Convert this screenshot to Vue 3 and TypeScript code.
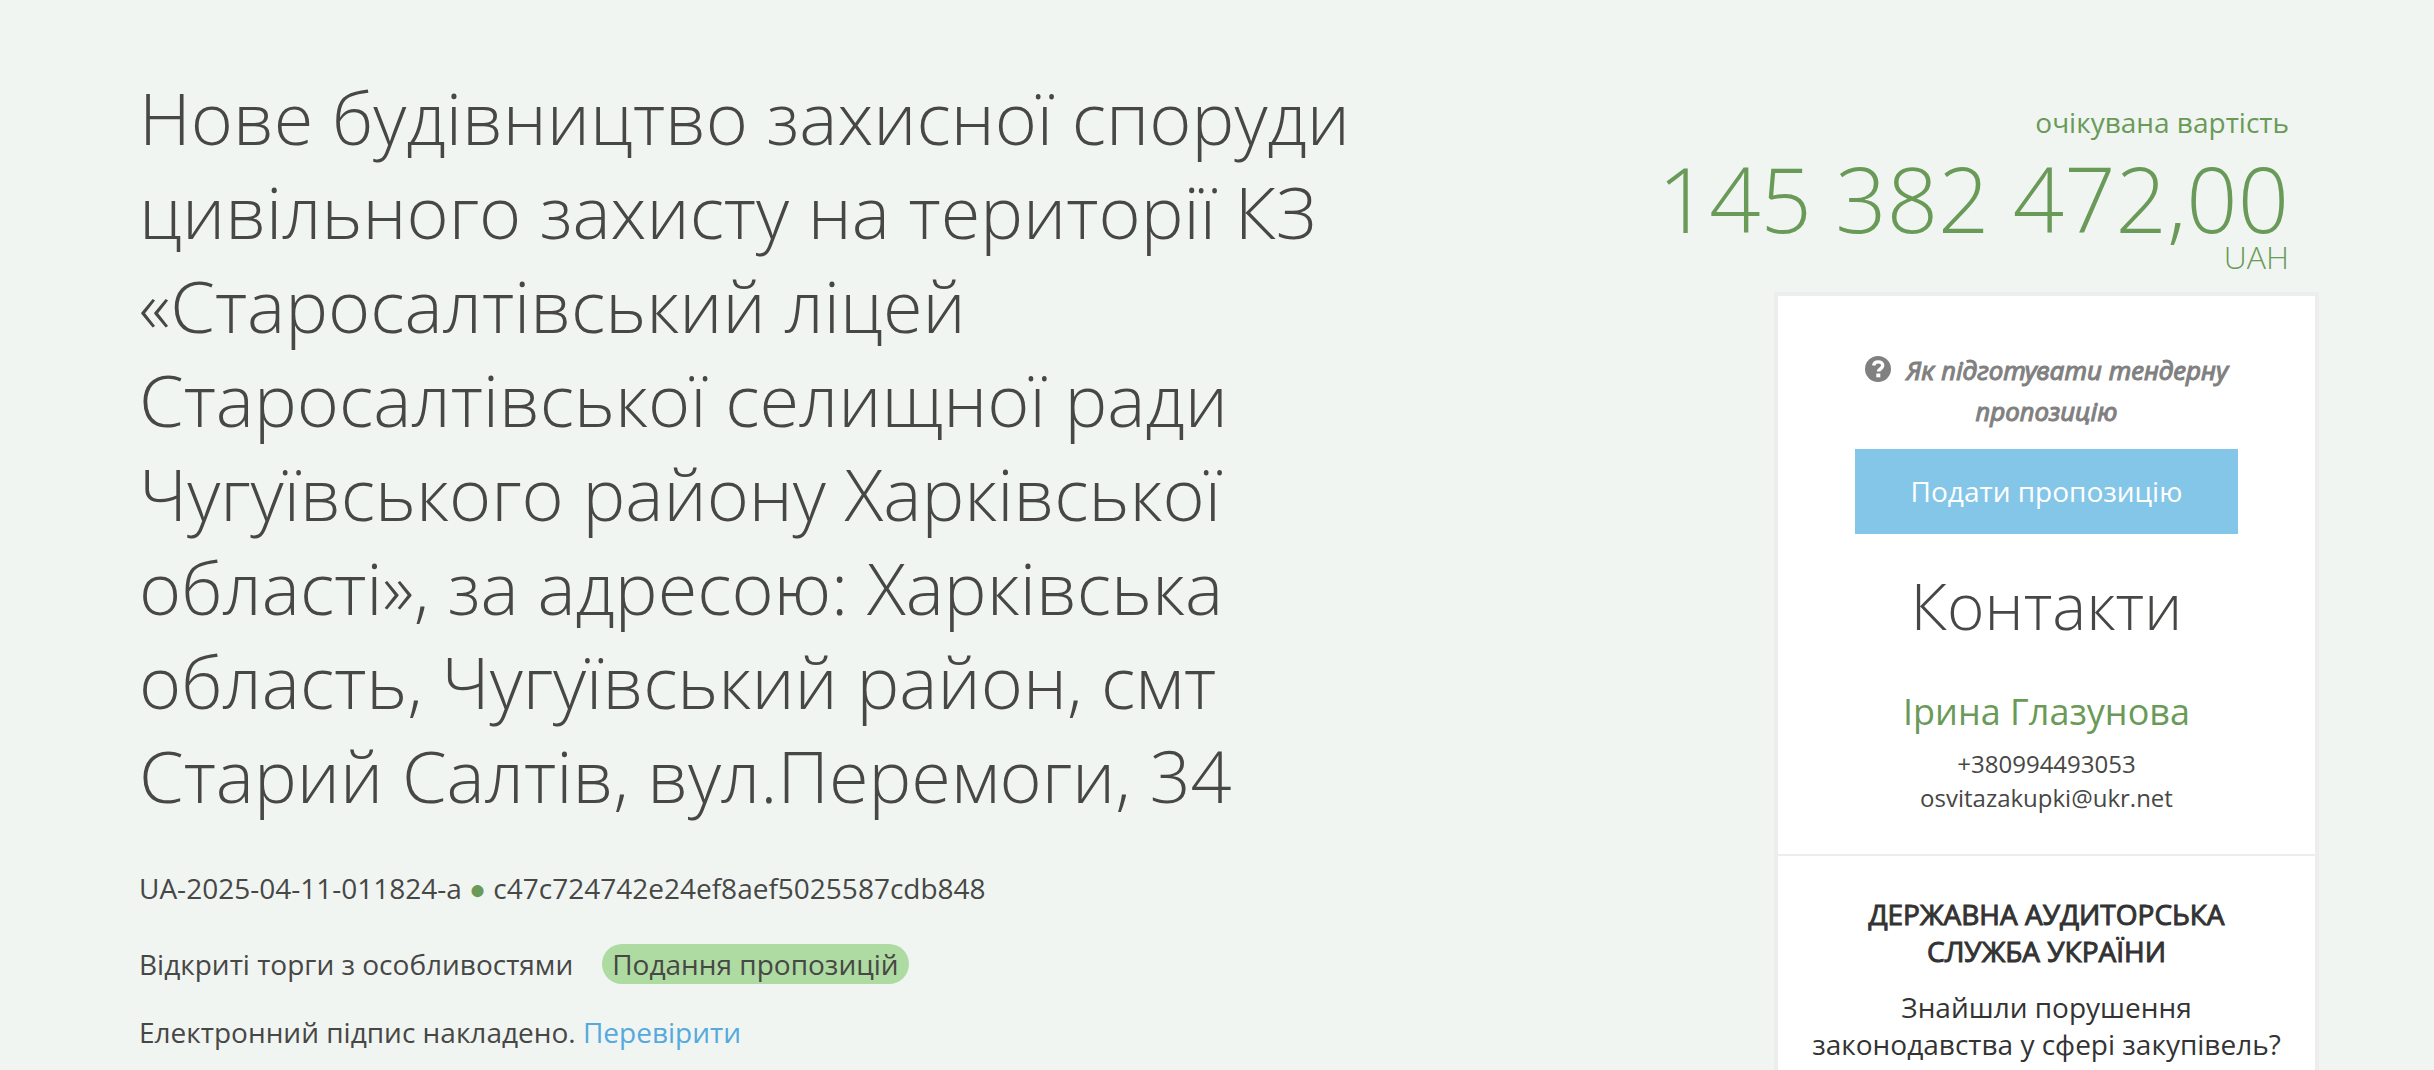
<script setup lang="ts">
interface Tender {
  title: string
  id: string
  hash: string
  procedure: string
  status: string
  amount: string
  currency: string
}

const tender: Tender = {
  title:
    'Нове будівництво захисної споруди цивільного захисту на території КЗ «Старосалтівський ліцей Старосалтівської селищної ради Чугуївського району Харківської області», за адресою: Харківська область, Чугуївський район, смт Старий Салтів, вул.Перемоги, 34',
  id: 'UA-2025-04-11-011824-a',
  hash: 'c47c724742e24ef8aef5025587cdb848',
  procedure: 'Відкриті торги з особливостями',
  status: 'Подання пропозицій',
  amount: '145 382 472,00',
  currency: 'UAH',
}

const contact = {
  name: 'Ірина Глазунова',
  phone: '+380994493053',
  email: 'osvitazakupki@ukr.net',
}
</script>

<template>
  <main class="page">
    <section class="summary">
      <h1 class="title">{{ tender.title }}</h1>
      <p class="ids">{{ tender.id }} <span class="dot">●</span> {{ tender.hash }}</p>
      <p class="type">
        <span>{{ tender.procedure }}</span>
        <span class="badge">{{ tender.status }}</span>
      </p>
      <p class="signature">Електронний підпис накладено. <a href="#sign">Перевірити</a></p>
    </section>

    <aside class="side">
      <div class="value">
        <div class="value-label">очікувана вартість</div>
        <div class="value-amount">{{ tender.amount }}</div>
        <div class="value-currency">{{ tender.currency }}</div>
      </div>

      <div class="card">
        <div class="apply">
          <a class="help" href="#help">
            <svg class="help-icon" viewBox="0 0 26 26" aria-hidden="true">
              <circle cx="13" cy="13" r="13" fill="#808080" />
              <path
                d="M8.6 9.6C9 7 10.600 5.900 13.200 5.900c2.700 0 4.500 1.500 4.500 3.700 0 3.400-4.300 3.300-4.300 6"
                fill="none"
                stroke="#fff"
                stroke-width="3.400"
              />
              <rect x="11.300" y="17.500" width="4" height="3.800" fill="#fff" />
            </svg>
            Як підготувати тендерну пропозицію
          </a>
          <button type="button" class="submit">Подати пропозицію</button>
        </div>

        <div class="contacts">
          <h2 class="contacts-title">Контакти</h2>
          <div class="name">{{ contact.name }}</div>
          <div class="line">{{ contact.phone }}</div>
          <div class="line">{{ contact.email }}</div>
        </div>

        <div class="audit">
          <h3 class="audit-title">ДЕРЖАВНА АУДИТОРСЬКА СЛУЖБА УКРАЇНИ</h3>
          <p class="audit-text">Знайшли порушення законодавства у сфері закупівель?</p>
        </div>
      </div>
    </aside>
  </main>
</template>

<style>
body {
  background: #f0f5f2;
}
</style>

<style scoped>
.page {
  box-sizing: border-box;
  min-height: 100vh;
  display: flex;
  justify-content: space-between;
  padding: 0 115px 0 139px;
  font-family: 'Open Sans', 'Noto Sans', sans-serif;
  font-size: 28px;
  line-height: 38px;
  color: #474745;
}

.summary {
  width: 60%;
  padding-top: 70px;
}

.title {
  margin: 0 0 47px;
  font-size: 72px;
  line-height: 94px;
  font-weight: 300;
}

.ids,
.type,
.signature {
  margin: 0;
}

.dot {
  color: #6a9a58;
}

.type {
  display: flex;
  align-items: center;
  gap: 29px;
  margin: 37px 0 29px;
}

.badge {
  padding: 0 10px;
  border-radius: 20px;
  line-height: 40px;
  background: #aedba2;
}

.signature a {
  color: #55a9dc;
  text-decoration: none;
}

.side {
  display: flex;
  flex-direction: column;
  align-items: flex-end;
  padding-top: 103px;
}

.value {
  margin-bottom: 21px;
  padding-right: 30px;
  text-align: right;
  white-space: nowrap;
  color: #6a9a58;
}

.value-amount {
  margin-top: 12px;
  font-size: 90px;
  line-height: 90px;
  font-weight: 300;
}

.value-currency {
  font-size: 32px;
  line-height: 28px;
  font-weight: 300;
}

.card {
  box-sizing: border-box;
  width: 545px;
  flex: 1;
  border: 4px solid #ededed;
  border-bottom: 0;
  background: #fff;
  text-align: center;
}

.apply {
  padding: 54px 77px 30px;
}

.help {
  display: block;
  margin-bottom: 17px;
  font-family: 'Noto Sans', sans-serif;
  font-size: 26px;
  line-height: 41px;
  font-style: italic;
  -webkit-text-stroke: 1px #808080;
  color: #808080;
  text-decoration: none;
}

.help-icon {
  width: 26px;
  height: 26px;
  margin-right: 9px;
  vertical-align: -2px;
}

.submit {
  display: block;
  width: 100%;
  height: 85px;
  padding: 0 0 2px;
  border: 0;
  background: #84c6e8;
  font: inherit;
  color: #fff;
}

.contacts {
  padding-bottom: 39px;
  border-bottom: 2px solid #ededed;
}

.contacts-title {
  margin: 0 0 40px;
  font-size: 64px;
  line-height: 84px;
  font-weight: 300;
}

.name {
  margin-bottom: 11px;
  font-size: 36px;
  line-height: 48px;
  color: #6a9a58;
}

.line {
  font-size: 24px;
  line-height: 34px;
}

.audit {
  padding: 40px 20px 0;
  line-height: 37px;
  color: #333;
}

.audit-title {
  margin: 0 40px 19px;
  font-size: 28px;
  line-height: 37px;
  font-weight: 400;
  -webkit-text-stroke: 1px #333;
}

.audit-text {
  margin: 0;
}
</style>
